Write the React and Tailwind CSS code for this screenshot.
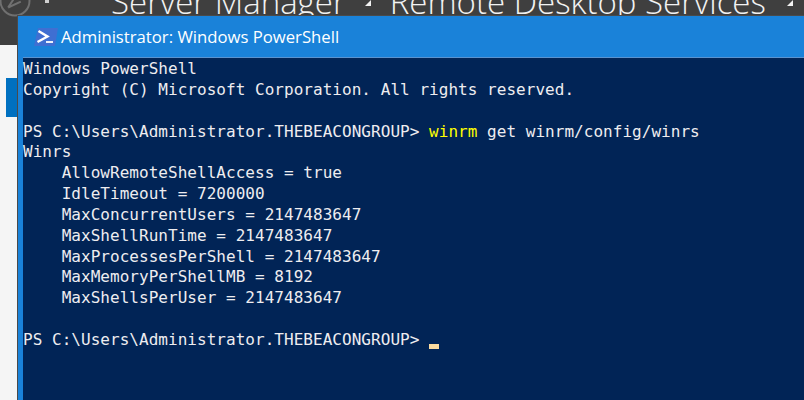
const lines = [
  { text: "Windows PowerShell" },
  { text: "Copyright (C) Microsoft Corporation. All rights reserved." },
  { text: "" },
  { text: "PS C:\\Users\\Administrator.THEBEACONGROUP> ", cmd: true },
  { text: "Winrs" },
  { text: "    AllowRemoteShellAccess = true" },
  { text: "    IdleTimeout = 7200000" },
  { text: "    MaxConcurrentUsers = 2147483647" },
  { text: "    MaxShellRunTime = 2147483647" },
  { text: "    MaxProcessesPerShell = 2147483647" },
  { text: "    MaxMemoryPerShellMB = 8192" },
  { text: "    MaxShellsPerUser = 2147483647" },
  { text: "" },
  { text: "PS C:\\Users\\Administrator.THEBEACONGROUP> ", cursor: true },
];

function PsIcon() {
  return (
    <svg width="24" height="18" viewBox="0 0 24 18" className="shrink-0">
      <path d="M4 0h20l-3 18H0z" fill="#3f6fd2" />
      <path d="M4.5 3l9 5.5-10 5.5" fill="none" stroke="#fff" strokeWidth="2.4" />
      <path d="M12 14h7" stroke="#fff" strokeWidth="1.8" />
    </svg>
  );
}

function BackIcon() {
  return (
    <svg width="32" height="32" viewBox="0 0 32 32" className="shrink-0 -mt-[15px]">
      <circle cx="15" cy="16" r="14.5" fill="none" stroke="#707070" strokeWidth="2" />
      <path d="M6 19h14M6 19l8-5" fill="none" stroke="#707070" strokeWidth="2" transform="rotate(-25 15 16)" />
    </svg>
  );
}

function Crumb() {
  return (
    <svg width="6" height="6" viewBox="0 0 6 6" className="shrink-0">
      <path d="M6 0v6H0z" fill="#f2f2f2" />
    </svg>
  );
}

export default function App() {
  return (
    <div className="relative w-[804px] h-[400px] overflow-hidden bg-[#f5f5f5]">
      <div className="h-[45px] bg-[#3f3f3f] overflow-hidden flex items-start text-[#f2f2f2] text-[33px] leading-[45px] font-['Open_Sans',sans-serif] font-light whitespace-pre">
        <BackIcon />
        <span className="shrink-0 w-[4px] h-[3px] ml-[13px] bg-[#d0d0d0]" />
        <span className="ml-[62px] -mt-[21px]">Server Manager</span>
        <span className="ml-[19px]"><Crumb /></span>
        <span className="ml-[19px] -mt-[21px]">Remote Desktop Services</span>
        <span className="ml-[21px]"><Crumb /></span>
      </div>
      <div className="mt-[33px] ml-[6px] w-[12px] h-[39px] bg-[#0070c0]" />

      <div className="absolute left-[17px] top-[15px] right-0 bottom-0 flex flex-col bg-[#1a82d9] pl-[5px] border-l border-t border-[#4a4a4a]">
        <div className="h-[41px] -ml-[5px] pl-[16px] flex items-center gap-[3px] text-white text-[16.7px] font-['Open_Sans',sans-serif] shrink-0">
          <PsIcon />
          <span>Administrator: Windows PowerShell</span>
        </div>
        <div className="flex-1 bg-[#012456] border-t border-[#5b93cf] text-[#eeedf0] font-['DejaVu_Sans_Mono',monospace] text-[16px] tracking-[0.035px] leading-[20.85px] whitespace-pre pt-[1px]">
          {lines.map((line, i) => (
            <div key={i} className="h-[20.85px] flex items-center">
              <span>{line.text}</span>
              {line.cmd && (
                <span>
                  <span className="text-[#ffff00]">winrm</span> get winrm/config/winrs
                </span>
              )}
              {line.cursor && (
                <span className="inline-block w-[10px] h-[5px] bg-[#fbdba0] self-end mb-[2px]" />
              )}
            </div>
          ))}
        </div>
      </div>
    </div>
  );
}
